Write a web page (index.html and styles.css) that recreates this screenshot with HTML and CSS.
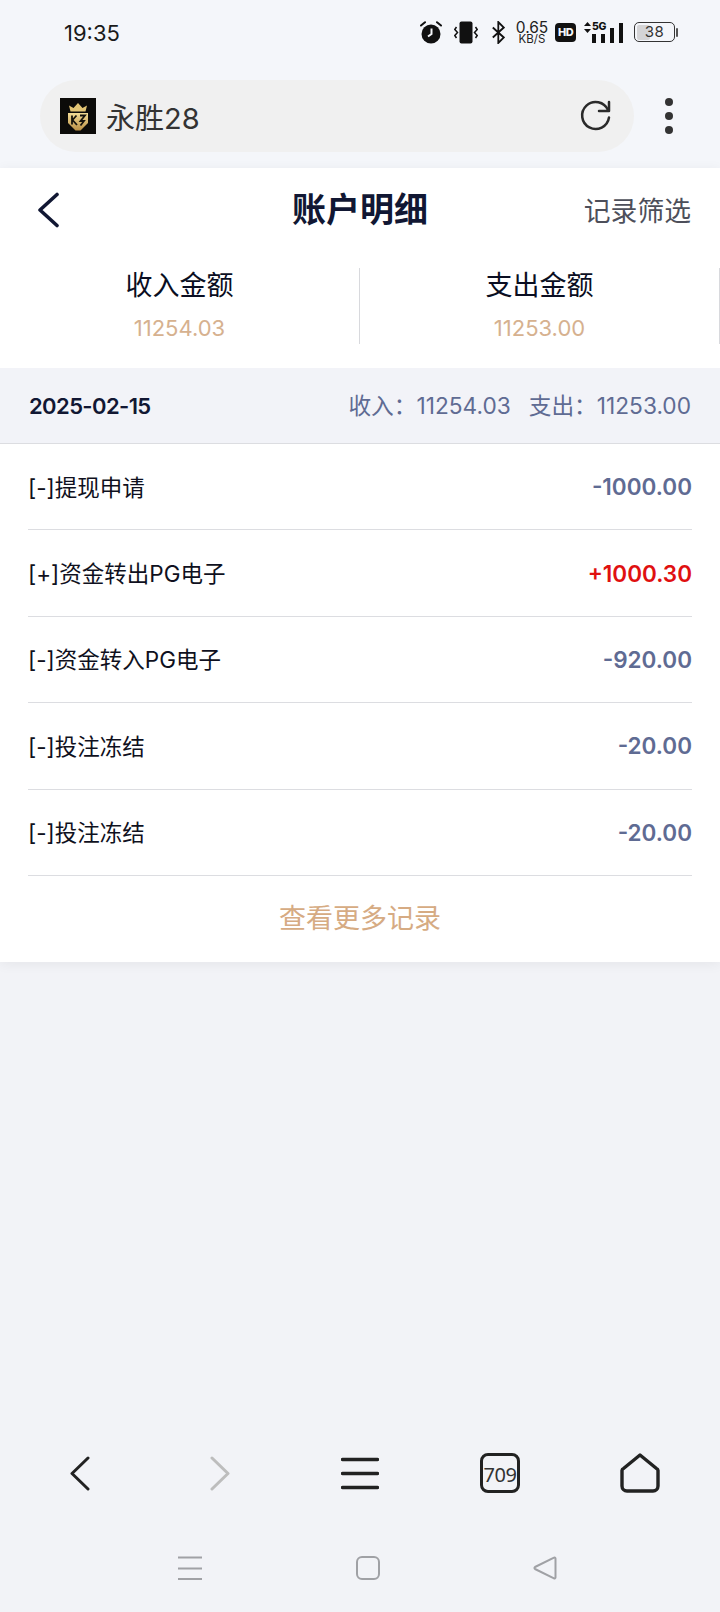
FILE: index.html
```html
<!DOCTYPE html>
<html>
<head>
  <title>账户明细</title>
  <link rel="stylesheet" href="styles.css">
</head>
<body>

  <div class="status-bar">
    <span class="time">19:35</span>
    <div class="status-icons">
      <svg class="ic-alarm" width="22" height="23" viewBox="0 0 22 23">
        <circle cx="11" cy="13" r="9.500" fill="#111"/>
        <path d="M11.500 7.500V13l-3.500 2.500" fill="none" stroke="#f4f6fa" stroke-width="2"/>
        <path d="M1 4.500 5 1.200M21 4.500 17 1.200" stroke="#111" stroke-width="2" stroke-linecap="round"/>
      </svg>
      <svg class="ic-vibrate" width="24" height="23" viewBox="0 0 24 23">
        <rect x="5.500" y="0.500" width="13" height="22" rx="2" fill="#111"/>
        <path d="M2.500 6 .8 8.500l2.700 3-2.700 3L2.500 17M21.500 6l1.700 2.500-2.700 3 2.700 3-1.700 2.500" fill="none" stroke="#111" stroke-width="1.500"/>
      </svg>
      <svg class="ic-bt" width="13" height="23" viewBox="0 0 13 23">
        <path d="M.8 6.500 11.800 16.500 6.300 22V1l5.500 5.500L.8 16.500" fill="none" stroke="#111" stroke-width="1.800"/>
      </svg>
      <div class="speed"><span class="speed-num">0.65</span><span class="speed-unit">KB/S</span></div>
      <span class="hd">HD</span>
      <div class="signal">
        <svg class="ic-arrows" width="7" height="11" viewBox="0 0 7 11"><path d="M3.500 0 7 4H0zM3.500 11 0 7h7z" fill="#111"/></svg>
        <span class="five-g">5G</span>
        <div class="bars">
          <i class="bar bar1"></i><i class="bar bar2"></i><i class="bar bar3"></i><i class="bar bar4"></i>
        </div>
      </div>
      <div class="battery">
        <div class="battery-body"><div class="battery-fill" style="width:38%"></div><span class="battery-num">38</span></div>
        <i class="battery-cap"></i>
      </div>
    </div>
  </div>

  <div class="browser-bar">
    <div class="address">
      <div class="favicon">
        <svg width="36" height="36" viewBox="0 0 36 36">
          <defs>
            <linearGradient id="gold" x1="0" y1="0" x2="0" y2="1">
              <stop offset="0" stop-color="#f3dc96"/>
              <stop offset="1" stop-color="#b98f45"/>
            </linearGradient>
          </defs>
          <rect width="36" height="36" fill="#0c0b09"/>
          <path d="M10.500 13.500 9 7.500l4.500 2.500L18 5l4.500 5L27 7.500l-1.500 6z" fill="#e2c474"/>
          <path d="M8 15h20v10l-7.500 7.500h-5L8 25z" fill="url(#gold)"/>
          <path d="M12 17.500v9M12.500 22l4-4.500M12.500 22l4.500 5M20 17.500h5l-4.500 5.500h3.500l-3.500 4.500" fill="none" stroke="#15120c" stroke-width="1.800"/>
        </svg>
      </div>
      <span class="site-name">永胜28</span>
      <svg class="reload" width="34" height="34" viewBox="0 0 34 34">
        <path d="M29 11A13.500 13.500 0 1 0 30 18.500" fill="none" stroke="#2a2a2a" stroke-width="2.500" stroke-linecap="round"/>
        <path d="M20 12H30V3" fill="none" stroke="#2a2a2a" stroke-width="2.500" stroke-linecap="round" stroke-linejoin="round"/>
      </svg>
    </div>
    <div class="more"><i></i><i></i><i></i></div>
  </div>

  <div class="card">
    <div class="page-head">
      <svg class="back" width="24" height="36" viewBox="0 0 24 36">
        <path d="M21 2.500 4 18l17 15.500" fill="none" stroke="#111733" stroke-width="3.600" stroke-linecap="round" stroke-linejoin="round"/>
      </svg>
      <h1 class="page-title">账户明细</h1>
      <span class="filter">记录筛选</span>
    </div>

    <div class="stats">
      <div class="stat">
        <div class="stat-label">收入金额</div>
        <div class="stat-value">11254.03</div>
      </div>
      <div class="stat">
        <div class="stat-label">支出金额</div>
        <div class="stat-value">11253.00</div>
      </div>
    </div>

    <div class="date-bar">
      <span class="date">2025-02-15</span>
      <div class="totals">
        <span>收入：11254.03</span>
        <span>支出：11253.00</span>
      </div>
    </div>

    <div class="list">
      <div class="row"><span class="row-name">[-]提现申请</span><span class="amount">-1000.00</span></div>
      <div class="row"><span class="row-name">[+]资金转出PG电子</span><span class="amount plus">+1000.30</span></div>
      <div class="row"><span class="row-name">[-]资金转入PG电子</span><span class="amount">-920.00</span></div>
      <div class="row"><span class="row-name">[-]投注冻结</span><span class="amount">-20.00</span></div>
      <div class="row"><span class="row-name">[-]投注冻结</span><span class="amount">-20.00</span></div>
    </div>

    <div class="more-link">查看更多记录</div>
  </div>

  <div class="spacer"></div>

  <div class="browser-nav">
    <svg width="20" height="35" viewBox="0 0 20 35"><path d="M18 2 2 17.500 18 33" fill="none" stroke="#222" stroke-width="3" stroke-linecap="round" stroke-linejoin="round"/></svg>
    <svg width="20" height="35" viewBox="0 0 20 35"><path d="M2 2l16 15.500L2 33" fill="none" stroke="#bdbdbd" stroke-width="3" stroke-linecap="round" stroke-linejoin="round"/></svg>
    <svg width="38" height="33" viewBox="0 0 38 33"><path d="M1.500 2.500h35M1.500 16.500h35M1.500 30.500h35" fill="none" stroke="#222" stroke-width="3.400" stroke-linecap="round"/></svg>
    <div class="tabs">709</div>
    <svg width="40" height="40" viewBox="0 0 40 40"><path d="M20 2 36.500 15.500a2.500 2.500 0 0 1 1.500 2V33a5 5 0 0 1-5 5H7a5 5 0 0 1-5-5V17.500a2.500 2.500 0 0 1 1.500-2z" fill="none" stroke="#222" stroke-width="3.400" stroke-linejoin="round"/></svg>
  </div>

  <div class="system-nav">
    <svg width="24" height="24" viewBox="0 0 24 24"><path d="M0 1.500h24M0 12.500h24M0 23h24" fill="none" stroke="#a0a1a5" stroke-width="2"/></svg>
    <svg width="24" height="24" viewBox="0 0 24 24"><rect x="1" y="1" width="22" height="22" rx="5" fill="none" stroke="#a0a1a5" stroke-width="2"/></svg>
    <svg width="24" height="24" viewBox="0 0 24 24"><path d="M22.500 2.500v19a1 1 0 0 1-1.500.8L2 13a1.200 1.200 0 0 1 0-2L21 1.700a1 1 0 0 1 1.500.8z" fill="none" stroke="#a0a1a5" stroke-width="2" stroke-linejoin="round"/></svg>
  </div>

</body>
</html>
```

FILE: styles.css
```css
* { box-sizing: border-box; }
html, body { height: 100%; }
body {
  margin: 0;
  width: 720px;
  height: 1612px;
  display: flex;
  flex-direction: column;
  background: #f2f3f7;
  font-family: Inter, "Noto Sans CJK SC", sans-serif;
  color: #111733;
}

/* status bar */
.status-bar {
  height: 66px;
  padding: 0 42px 0 64px;
  background: #f4f6fa;
  display: flex;
  align-items: center;
  justify-content: space-between;
}
.time { font-size: 22px; color: #1a1a1a; margin-top: -1px; }
.status-icons { display: flex; align-items: center; margin-top: -2px; }
.ic-vibrate { margin-left: 12px; }
.ic-bt { margin-left: 14px; }
.speed {
  margin-left: 11px;
  width: 32px;
  padding-top: 2px;
  display: flex;
  flex-direction: column;
  align-items: center;
  color: #222;
}
.speed-num { font-size: 15.500px; line-height: 13px; }
.speed-unit { font-size: 11.500px; line-height: 11px; }
.hd {
  margin-left: 7px;
  width: 21px;
  height: 19px;
  border-radius: 4px;
  background: #111;
  color: #f4f6fa;
  font-size: 11px;
  font-weight: 800;
  line-height: 19px;
  text-align: center;
  letter-spacing: -0.5px;
}
.signal { margin-left: 8px; width: 39px; height: 22px; position: relative; }
.ic-arrows { position: absolute; left: 0; top: 1px; }
.five-g {
  position: absolute;
  left: 8px;
  top: 0;
  font-size: 10.500px;
  line-height: 11px;
  font-weight: 800;
  color: #111;
  letter-spacing: -0.3px;
}
.bars {
  position: absolute;
  right: 0;
  bottom: 0;
  display: flex;
  align-items: flex-end;
  gap: 5px;
}
.bar { display: block; width: 4px; background: #111; }
.bar1 { height: 9px; }
.bar2 { height: 9px; }
.bar3 { height: 15px; }
.bar4 { height: 20px; }
.battery { margin-left: 11px; display: flex; align-items: center; gap: 1px; }
.battery-body {
  width: 41px;
  height: 20px;
  border: 1.500px solid #333;
  border-radius: 5px;
  padding: 1.500px;
  position: relative;
}
.battery-fill { height: 100%; background: #d4d4d6; border-radius: 2px; }
.battery-num {
  position: absolute;
  inset: 0;
  font-size: 15px;
  line-height: 17px;
  text-align: center;
  color: #333;
  letter-spacing: 0.5px;
}
.battery-cap { width: 2px; height: 9px; background: #555; border-radius: 1px; }

/* browser address bar */
.browser-bar {
  height: 102px;
  padding: 14px 0 16px 40px;
  background: #f4f6fa;
  display: flex;
  align-items: flex-start;
}
.address {
  width: 594px;
  height: 72px;
  border-radius: 36px;
  background: #f0f0f0;
  padding: 0 21px 0 20px;
  display: flex;
  align-items: center;
}
.favicon { width: 36px; height: 36px; flex: none; }
.favicon svg { display: block; }
.site-name {
  margin-left: 10px;
  flex: 1;
  font-size: 29px;
  color: #333;
}
.reload { flex: none; }
.more {
  width: 36px;
  height: 72px;
  margin-left: 17px;
  display: flex;
  flex-direction: column;
  align-items: center;
  justify-content: center;
  gap: 6px;
}
.more i { display: block; width: 8px; height: 8px; border-radius: 50%; background: #333; }

/* account card */
.card {
  background: #fff;
  box-shadow: 0 2px 12px rgba(0,0,0,0.06);
}
.page-head {
  height: 84px;
  padding: 0 29px 0 36px;
  display: flex;
  align-items: center;
  position: relative;
}
.back { flex: none; }
.page-title {
  position: absolute;
  left: 0;
  right: 0;
  margin: 0;
  text-align: center;
  font-size: 34px;
  font-weight: 700;
  line-height: 84px;
  pointer-events: none;
}
.filter { margin-left: auto; font-size: 26.800px; color: #4d4f5a; margin-top: -2px; }

.stats { height: 116px; display: flex; padding-top: 16px; }
.stat {
  width: 360px;
  height: 76px;
  border-right: 1px solid #d8d9dd;
  text-align: center;
}
.stat-label { font-size: 27px; line-height: 36px; color: #0a0e22; }
.stat-value { font-size: 22px; line-height: 30px; margin-top: 9px; color: #d6b18f; }

.date-bar {
  height: 76px;
  padding: 0 29px;
  background: #f2f3f8;
  border-bottom: 1px solid #dcdde1;
  display: flex;
  align-items: center;
  justify-content: space-between;
}
.date { font-size: 22px; font-weight: 600; letter-spacing: -0.6px; }
.totals { display: flex; gap: 18px; font-size: 22.700px; color: #5f6b93; margin-top: -3px; }

.list { padding: 0 28px; }
.row {
  height: 86.400px;
  border-bottom: 1px solid #dcdde1;
  display: flex;
  align-items: center;
  justify-content: space-between;
}
.row-name { font-size: 22.500px; color: #0f1020; margin-top: -2px; }
.amount { font-size: 22.500px; font-weight: 600; color: #5f6b93; }
.amount.plus { color: #e01010; }

.more-link {
  height: 86px;
  text-align: center;
  font-size: 27px;
  line-height: 86px;
  color: #d6ab83;
}

.spacer { flex: 1; }

/* bottom browser buttons */
.browser-nav {
  height: 98px;
  padding: 0 10px 4px;
  display: grid;
  grid-template-columns: repeat(5, 1fr);
  align-items: center;
  justify-items: center;
}
.tabs {
  width: 40px;
  height: 40px;
  border: 3.500px solid #222;
  border-radius: 8px;
  font-size: 20px;
  letter-spacing: -0.5px;
  color: #333;
  font-family: "Noto Sans", sans-serif;
  display: flex;
  align-items: center;
  justify-content: center;
  padding-top: 2px;
}

/* phone navigation */
.system-nav {
  height: 88px;
  padding: 0 163px 0 178px;
  display: flex;
  align-items: center;
  justify-content: space-between;
}
```
